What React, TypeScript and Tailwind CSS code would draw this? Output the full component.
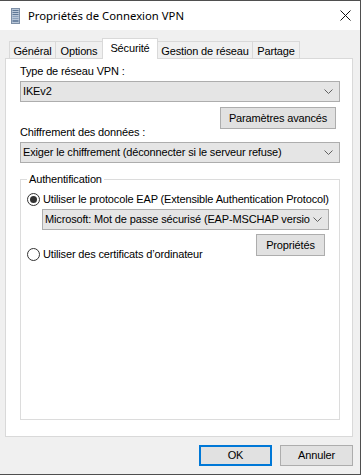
import type { ReactNode } from "react";

const Chevron = () => (
  <svg width="9" height="5" viewBox="0 0 9 5" className="shrink-0">
    <path d="M0.5 0.5 L4.5 4.5 L8.5 0.5" fill="none" stroke="#606060" strokeWidth="1" />
  </svg>
);

const Combo = ({ children, className = "" }: { children: ReactNode; className?: string }) => (
  <div
    className={`h-[21px] flex items-center border border-[#adadad] bg-[#e5e5e5] pl-[2px] pr-[4px] ${className}`}
  >
    <span className="flex-1 overflow-hidden whitespace-nowrap leading-[13px]">{children}</span>
    <span className="w-[14px] flex justify-center">
      <Chevron />
    </span>
  </div>
);

const Button = ({ children, className = "" }: { children: ReactNode; className?: string }) => (
  <div
    className={`h-[22px] flex items-center justify-center border border-[#adadad] bg-[#e1e1e1] leading-[13px] whitespace-nowrap ${className}`}
  >
    {children}
  </div>
);

const Radio = ({ checked, label }: { checked?: boolean; label: string }) => (
  <div className="flex items-center h-[13px] leading-[13px] whitespace-nowrap">
    <span className="w-[13px] h-[13px] shrink-0 rounded-full border border-[#333333] bg-white flex items-center justify-center">
      {checked && <span className="w-[7px] h-[7px] rounded-full bg-[#333333]" />}
    </span>
    <span className="ml-[3px]">{label}</span>
  </div>
);

const tabs = [
  { label: "Général", w: "w-[47px]" },
  { label: "Options", w: "w-[48px]" },
  { label: "Sécurité", w: "w-[56px]", active: true },
  { label: "Gestion de réseau", w: "w-[96px]" },
  { label: "Partage", w: "w-[48px]" },
];

export default function App() {
  return (
    <div className="w-[363px] h-[476px] bg-white overflow-hidden">
      <div
        className="w-[361px] h-[475px] border-t border-r border-b border-[#4f4f4f] bg-[#f0f0f0] flex flex-col text-[11px] tracking-[-0.15px] text-black"
        style={{ fontFamily: '"Liberation Sans", Arial, sans-serif' }}
      >
        {/* title bar */}
        <div className="h-[29px] bg-white flex items-center shrink-0">
          <svg width="9" height="16" viewBox="0 0 9 16" className="ml-[11px]">
            <rect x="0.5" y="0.5" width="8" height="15" fill="#b9c7d8" stroke="#7d8fa6" />
            <rect x="1.5" y="2" width="6" height="1" fill="#5f7896" />
            <rect x="1.5" y="4" width="6" height="1" fill="#5f7896" />
            <rect x="1.5" y="6" width="6" height="1" fill="#5f7896" />
            <rect x="1.5" y="8" width="6" height="1" fill="#8aa0bb" />
            <rect x="1.5" y="10" width="6" height="1" fill="#8aa0bb" />
            <rect x="1.5" y="12" width="6" height="2" fill="#6f86a3" />
          </svg>
          <span
            className="ml-[8px] text-[11.3px] tracking-normal leading-[16px] flex-1"
            style={{ fontFamily: '"Noto Sans", "Open Sans", sans-serif' }}
          >
            Propriétés de Connexion VPN
          </span>
          <svg width="11" height="11" viewBox="0 0 11 11" className="mr-[9px]">
            <path d="M0.5 0.5 L10.5 10.5 M10.5 0.5 L0.5 10.5" stroke="#111" strokeWidth="1" />
          </svg>
        </div>

        {/* tabs */}
        <div className="flex items-end h-[20px] mt-[8px] pl-[9px] shrink-0">
          {tabs.map((t, i) => (
            <div
              key={t.label}
              className={`${t.w} ${i > 0 ? "-ml-px" : ""} flex justify-center border-t border-l border-r border-[#d9d9d9] ${
                t.active
                  ? "h-[21px] -mb-px bg-white relative z-10 pt-[3px]"
                  : "h-[17px] bg-[#f0f0f0] pt-[3px]"
              }`}
            >
              <span className="leading-[13px] whitespace-nowrap">{t.label}</span>
            </div>
          ))}
        </div>

        {/* panel */}
        <div className="ml-[5px] w-[348px] h-[379px] border border-[#d9d9d9] bg-white flex flex-col pl-[14px] pr-[12px] pt-[6px] pb-[16px] shrink-0">
          <div className="leading-[13px]">Type de réseau VPN :</div>
          <Combo className="mt-[3px]">IKEv2</Combo>
          <Button className="mt-[5px] ml-auto mr-[4px] w-[116px]">Paramètres avancés</Button>
          <div className="leading-[13px] -mt-[3px]">Chiffrement des données :</div>
          <Combo className="mt-[3px]">Exiger le chiffrement (déconnecter si le serveur refuse)</Combo>

          <fieldset className="mt-[10px] flex-1 border border-[#dcdcdc] min-w-0">
            <legend className="ml-[6px] px-[2px] leading-[13px]">Authentification</legend>
            <div className="pl-[6px] pr-[10px] pt-[7px] flex flex-col">
              <Radio checked label="Utiliser le protocole EAP (Extensible Authentication Protocol)" />
              <Combo className="mt-[3px] ml-[15px]">
                Microsoft: Mot de passe sécurisé (EAP-MSCHAP version 2)
              </Combo>
              <div className="flex items-start justify-between mt-[4px]">
                <div className="mt-[14px]">
                  <Radio label="Utiliser des certificats d’ordinateur" />
                </div>
                <Button className="w-[69px] mr-[4px]">Propriétés</Button>
              </div>
            </div>
          </fieldset>
        </div>

        {/* footer */}
        <div className="flex justify-end gap-[8px] mt-[8px] mr-[7px]">
          <div className="w-[73px] h-[21px] flex items-center justify-center border-2 border-[#0078d7] bg-[#e1e1e1] leading-[13px]">
            OK
          </div>
          <div className="w-[73px] h-[21px] flex items-center justify-center border border-[#adadad] bg-[#e1e1e1] leading-[13px]">
            Annuler
          </div>
        </div>
      </div>
    </div>
  );
}
